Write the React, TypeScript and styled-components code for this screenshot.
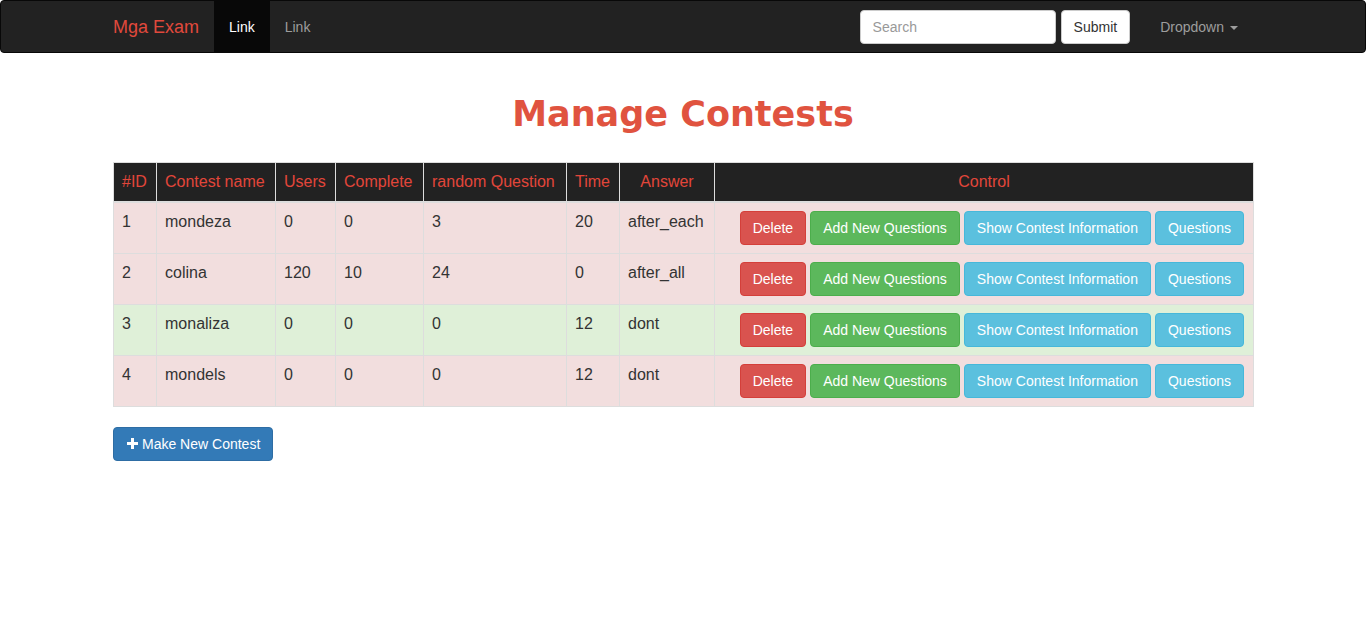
import React from "react";
import styled, { createGlobalStyle } from "styled-components";

const Global = createGlobalStyle`
  * { box-sizing: border-box; }
  body {
    margin: 0;
    font-family: "Liberation Sans", Arial, Helvetica, sans-serif;
    font-size: 14px;
    line-height: 1.42857;
    color: #333;
    background: #fff;
  }
`;

const Navbar = styled.nav`
  background: #222;
  border: 1px solid #080808;
  border-radius: 4px;
`;

const NavInner = styled.div`
  width: 1170px;
  margin: 0 auto;
  padding: 0 15px;
  display: flex;
  align-items: stretch;
  height: 51px;
`;

const Brand = styled.a`
  margin-left: -15px;
  padding: 16px 15px 14px;
  font-size: 18px;
  line-height: 20px;
  color: #e0493c;
  text-decoration: none;
`;

const NavLink = styled.a<{ $active?: boolean }>`
  padding: 16px 15px 14px;
  line-height: 20px;
  font-size: 14px;
  text-decoration: none;
  color: ${(p) => (p.$active ? "#fff" : "#9d9d9d")};
  background: ${(p) => (p.$active ? "#080808" : "transparent")};
`;

const Spacer = styled.div`
  flex: 1;
`;

const SearchForm = styled.form`
  display: flex;
  align-items: center;
  gap: 5px;
  padding: 0 15px 0 16px;
  margin: 0;
`;

const SearchInput = styled.input`
  width: 196px;
  height: 34px;
  padding: 6px 12px;
  font-family: inherit;
  font-size: 14px;
  color: #555;
  background: #fff;
  border: 1px solid #ccc;
  border-radius: 4px;
  outline: none;
  &::placeholder {
    color: #999;
  }
`;

const SubmitBtn = styled.button`
  height: 34px;
  padding: 6px 12px;
  font-family: inherit;
  font-size: 14px;
  line-height: 20px;
  color: #333;
  background: #fff;
  border: 1px solid #ccc;
  border-radius: 4px;
`;

const DropdownToggle = styled.a`
  padding: 1px 15px 0;
  line-height: 20px;
  font-size: 14px;
  color: #9d9d9d;
  text-decoration: none;
  display: flex;
  align-items: center;
`;

const Caret = styled.span`
  display: inline-block;
  width: 0;
  height: 0;
  margin-left: 6px;
  margin-top: 1px;
  border-top: 4px solid #9d9d9d;
  border-left: 4px solid transparent;
  border-right: 4px solid transparent;
`;

const Container = styled.main`
  width: 1170px;
  margin: 0 auto;
  padding: 20px 15px 0;
`;

const Title = styled.h1`
  margin: 22px 0 10px;
  text-align: center;
  font-family: "DejaVu Sans", "Liberation Sans", sans-serif;
  font-weight: 700;
  font-size: 35px;
  line-height: 39.6px;
  color: #e0533f;
`;

const Table = styled.table`
  width: 100%;
  margin-top: 27px;
  margin-bottom: 20px;
  border-collapse: collapse;
  table-layout: fixed;
  border: 1px solid #ddd;
  font-size: 16px;
`;

const Col = styled.col<{ $w: number }>`
  width: ${(p) => p.$w}px;
`;

const Th = styled.th<{ $center?: boolean }>`
  background: #222;
  color: #e2463a;
  font-weight: 400;
  padding: 8px;
  line-height: 22px;
  text-align: ${(p) => (p.$center ? "center" : "left")};
  vertical-align: bottom;
  border: 1px solid #ddd;
  border-bottom: 2px solid #ddd;
  white-space: nowrap;
`;

const Tr = styled.tr<{ $tone: "danger" | "success" }>`
  background: ${(p) => (p.$tone === "success" ? "#dff0d8" : "#f2dede")};
`;

const Td = styled.td`
  padding: 8px;
  line-height: 22.86px;
  vertical-align: top;
  border: 1px solid #ddd;
  color: #333;
`;

const Actions = styled.div`
  display: flex;
  justify-content: flex-end;
  gap: 4px;
  padding-right: 1px;
`;

const palette = {
  danger: ["#d9534f", "#d43f3a"],
  success: ["#5cb85c", "#4cae4c"],
  info: ["#5bc0de", "#46b8da"],
  primary: ["#337ab7", "#2e6da4"],
};

const Btn = styled.button<{ $kind: keyof typeof palette }>`
  display: inline-flex;
  align-items: center;
  height: 34px;
  padding: 6px 12px;
  font-family: inherit;
  font-size: 14px;
  line-height: 20px;
  color: #fff;
  white-space: nowrap;
  background: ${(p) => palette[p.$kind][0]};
  border: 1px solid ${(p) => palette[p.$kind][1]};
  border-radius: 4px;
  cursor: pointer;
`;

const PlusIcon = styled.svg`
  width: 11px;
  height: 11px;
  margin-right: 4px;
  margin-left: 1px;
`;

type Row = {
  id: number;
  name: string;
  users: number;
  complete: number;
  random: number;
  time: number;
  answer: string;
  tone: "danger" | "success";
};

const rows: Row[] = [
  { id: 1, name: "mondeza", users: 0, complete: 0, random: 3, time: 20, answer: "after_each", tone: "danger" },
  { id: 2, name: "colina", users: 120, complete: 10, random: 24, time: 0, answer: "after_all", tone: "danger" },
  { id: 3, name: "monaliza", users: 0, complete: 0, random: 0, time: 12, answer: "dont", tone: "success" },
  { id: 4, name: "mondels", users: 0, complete: 0, random: 0, time: 12, answer: "dont", tone: "danger" },
];

export default function App() {
  return (
    <>
      <Global />
      <Navbar>
        <NavInner>
          <Brand href="#">Mga Exam</Brand>
          <NavLink href="#" $active>
            Link
          </NavLink>
          <NavLink href="#">Link</NavLink>
          <Spacer />
          <SearchForm onSubmit={(e) => e.preventDefault()}>
            <SearchInput placeholder="Search" />
            <SubmitBtn type="submit">Submit</SubmitBtn>
          </SearchForm>
          <DropdownToggle href="#">
            Dropdown
            <Caret />
          </DropdownToggle>
        </NavInner>
      </Navbar>
      <Container>
        <Title>Manage Contests</Title>
        <Table>
          <colgroup>
            <Col $w={43} />
            <Col $w={119} />
            <Col $w={60} />
            <Col $w={88} />
            <Col $w={143} />
            <Col $w={53} />
            <Col $w={95} />
            <Col $w={539} />
          </colgroup>
          <thead>
            <tr>
              <Th>#ID</Th>
              <Th>Contest name</Th>
              <Th>Users</Th>
              <Th>Complete</Th>
              <Th>random Question</Th>
              <Th>Time</Th>
              <Th $center>Answer</Th>
              <Th $center>Control</Th>
            </tr>
          </thead>
          <tbody>
            {rows.map((r) => (
              <Tr key={r.id} $tone={r.tone}>
                <Td>{r.id}</Td>
                <Td>{r.name}</Td>
                <Td>{r.users}</Td>
                <Td>{r.complete}</Td>
                <Td>{r.random}</Td>
                <Td>{r.time}</Td>
                <Td>{r.answer}</Td>
                <Td>
                  <Actions>
                    <Btn $kind="danger">Delete</Btn>
                    <Btn $kind="success">Add New Questions</Btn>
                    <Btn $kind="info">Show Contest Information</Btn>
                    <Btn $kind="info">Questions</Btn>
                  </Actions>
                </Td>
              </Tr>
            ))}
          </tbody>
        </Table>
        <Btn $kind="primary">
          <PlusIcon viewBox="0 0 11 11">
            <path d="M4 0h3v4h4v3H7v4H4V7H0V4h4z" fill="#fff" />
          </PlusIcon>
          Make New Contest
        </Btn>
      </Container>
    </>
  );
}
